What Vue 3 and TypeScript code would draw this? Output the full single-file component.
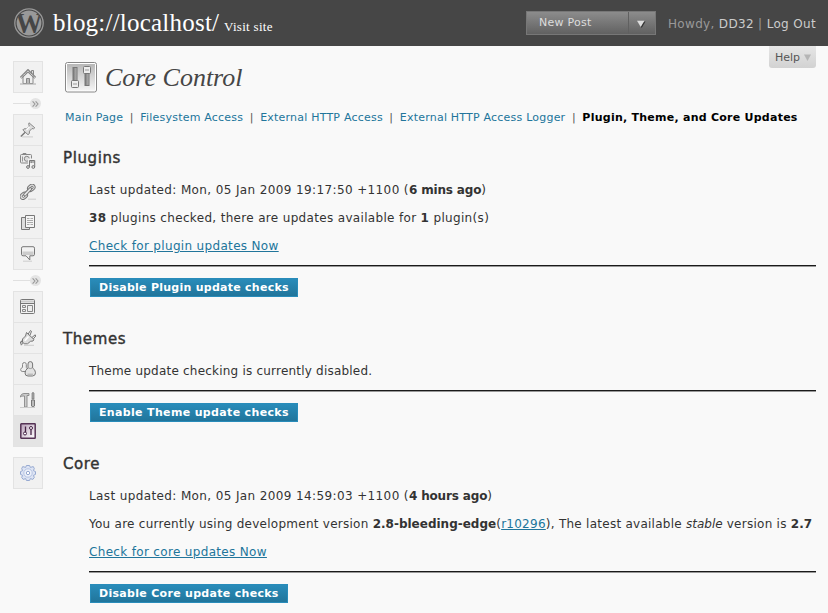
<script setup lang="ts">
interface Part { text: string; kind?: 'b' | 'a' | 'i' }
interface Line { cls: string; parts: Part[] }
interface Section { title: string; cls: string; lines: Line[]; button: string }

const tabs = [
  'Main Page',
  'Filesystem Access',
  'External HTTP Access',
  'External HTTP Access Logger',
]

const sections: Section[] = [
  {
    title: 'Plugins',
    cls: 'plugins',
    lines: [
      { cls: 'stamp', parts: [{ text: 'Last updated: Mon, 05 Jan 2009 19:17:50 +1100 (' }, { text: '6 mins ago', kind: 'b' }, { text: ')' }] },
      { cls: 'count', parts: [{ text: '38', kind: 'b' }, { text: ' plugins checked, there are updates available for ' }, { text: '1', kind: 'b' }, { text: ' plugin(s)' }] },
      { cls: 'check', parts: [{ text: 'Check for plugin updates Now', kind: 'a' }] },
    ],
    button: 'Disable Plugin update checks',
  },
  {
    title: 'Themes',
    cls: 'themes',
    lines: [{ cls: 'status', parts: [{ text: 'Theme update checking is currently disabled.' }] }],
    button: 'Enable Theme update checks',
  },
  {
    title: 'Core',
    cls: 'core',
    lines: [
      { cls: 'stamp', parts: [{ text: 'Last updated: Mon, 05 Jan 2009 14:59:03 +1100 (' }, { text: '4 hours ago', kind: 'b' }, { text: ')' }] },
      {
        cls: 'version',
        parts: [
          { text: 'You are currently using development version ' },
          { text: '2.8-bleeding-edge', kind: 'b' },
          { text: '(' },
          { text: 'r10296', kind: 'a' },
          { text: '), The latest available ' },
          { text: 'stable', kind: 'i' },
          { text: ' version is ' },
          { text: '2.7', kind: 'b' },
        ],
      },
      { cls: 'check', parts: [{ text: 'Check for core updates Now', kind: 'a' }] },
    ],
    button: 'Disable Core update checks',
  },
]
</script>

<template>
  <div class="page">
    <header class="head">
      <svg class="logo" viewBox="0 0 30 30">
        <defs><clipPath id="disc"><circle cx="15" cy="15" r="12.6" /></clipPath></defs>
        <circle cx="15" cy="15" r="14.2" fill="none" stroke="#999" stroke-width="1.3" />
        <circle cx="15" cy="15" r="12.4" fill="#999" />
        <g clip-path="url(#disc)"><text x="15" y="25" text-anchor="middle" textLength="27" lengthAdjust="spacingAndGlyphs" class="logo-w">W</text></g>
      </svg>
      <h1 class="site">blog://localhost/</h1>
      <a class="visit">Visit site</a>
      <div class="newpost">
        <span class="np-label">New Post</span>
        <span class="np-arrow">
          <svg width="10" height="8" viewBox="0 0 10 8"><path d="M2 1.5h7.5L5.7 8z" fill="#333" /><path d="M1 .8h7.5L4.7 7z" fill="#ddd" /></svg>
        </span>
      </div>
      <p class="user"><span class="dim">Howdy,</span> <a>DD32</a> <span class="dim">|</span> <a>Log Out</a></p>
    </header>

    <div class="body">
      <nav class="menu">
        <div class="group home">
          <div class="item">
            <svg class="ic" viewBox="0 0 16 16">
              <path d="M3 8v6.500h10V8L8 3.200z" fill="#eee" stroke="#888" />
              <path d="M11.500 4V1.500h2V6" fill="#ddd" stroke="#888" />
              <path d="M.7 8.800L8 1.500l7.300 7.300" fill="none" stroke="#888" stroke-width="2.600" />
              <path d="M1.200 8.600L8 1.900l6.800 6.700" fill="none" stroke="#eee" stroke-width="1" stroke-dasharray="1.200 .8" />
              <path d="M6.500 14.500v-5h3v5" fill="#bbb" stroke="#888" />
              <path d="M0 15h16" stroke="#aaa" />
            </svg>
          </div>
        </div>
        <div class="sep"><i class="rule" /><span class="dot"><svg width="7" height="6" viewBox="0 0 7 6"><path d="M.6.3L3 3 .6 5.7M3.6.3L6 3 3.6 5.7" fill="none" stroke="#999" stroke-width="1.1" /></svg></span></div>
        <div class="group">
          <div class="item">
            <svg class="ic" viewBox="0 0 16 16">
              <path d="M6 9.500L.8 14.400" stroke="#777" stroke-width="1.400" />
              <path d="M9 .8l5.800 5-1.300 1-1.500-.3-2.500 2.600-.2 2.500-1.300 1.100L2.800 8l1.100-1.100 2.800-.2 2.600-2.500-.6-2z" fill="#ddd" stroke="#888" />
              <path d="M9.400 4.700l-3 3.200" stroke="#fafafa" stroke-width="1.500" />
              <path d="M2 14.900h11" stroke="#ccc" />
            </svg>
          </div>
          <div class="item">
            <svg class="ic" viewBox="0 0 16 16">
              <rect x=".5" y="1.500" width="11" height="8.500" rx="1" fill="#ececec" stroke="#888" />
              <path d="M3 1.500V.5h3v1" fill="none" stroke="#888" />
              <circle cx="6.800" cy="5.800" r="2.500" fill="#ddd" stroke="#888" />
              <path d="M2.500 3.500v5" stroke="#999" />
              <path d="M9.500 14V7h5.500v7" fill="none" stroke="#f1f1f1" stroke-width="3" />
              <path d="M9.500 14V7.500h5.200V14M9.500 9h5.200" fill="none" stroke="#777" />
              <circle cx="8" cy="14" r="1.400" fill="#ddd" stroke="#777" /><circle cx="13.300" cy="14" r="1.400" fill="#ddd" stroke="#777" />
            </svg>
          </div>
          <div class="item">
            <svg class="ic" viewBox="0 0 16 16">
              <rect x="7.300" y=".8" width="8" height="6" rx="3" transform="rotate(-42 11.300 3.800)" fill="#e2e2e2" stroke="#777" />
              <rect x="-.2" y="8.800" width="8" height="6" rx="3" transform="rotate(-42 3.800 11.800)" fill="#e2e2e2" stroke="#777" />
              <circle cx="12" cy="3.400" r="1.200" fill="#f8f8f8" stroke="#777" /><circle cx="3.400" cy="12.200" r="1.200" fill="#f8f8f8" stroke="#777" />
              <path d="M5 10.600l5.300-5.600" stroke="#777" stroke-width="3.600" stroke-linecap="round" /><path d="M5 10.600l5.300-5.600" stroke="#e6e6e6" stroke-width="1.700" stroke-linecap="round" />
              <path d="M8 15.200h8" stroke="#ccc" />
            </svg>
          </div>
          <div class="item">
            <svg class="ic" viewBox="0 0 16 16">
              <path d="M1.500 2.500h8v12h-8z" fill="#ddd" stroke="#777" />
              <path d="M5.500.5h9v12h-9z" fill="#f5f5f5" stroke="#777" />
              <path d="M7 3.500h2.500M10.500 3.500H13M7 5.500h6M7 7.500h6M7 9.500h2.500M10.500 9.500H13" stroke="#aaa" />
            </svg>
          </div>
          <div class="item">
            <svg class="ic" viewBox="0 0 16 16">
              <path d="M3 .7h10q1.500 0 1.500 1.500v6q0 1.600-1.500 1.600h-3.200V14L6 9.800H3q-1.500 0-1.500-1.600v-6Q1.500.7 3 .7z" fill="#f2f2f2" stroke="#777" />
              <path d="M2.500 5.500h11v3.500h-11z" fill="#ccc" />
              <path d="M3 15.200h9" stroke="#ccc" />
            </svg>
          </div>
        </div>
        <div class="sep"><i class="rule" /><span class="dot"><svg width="7" height="6" viewBox="0 0 7 6"><path d="M.6.3L3 3 .6 5.7M3.6.3L6 3 3.6 5.7" fill="none" stroke="#999" stroke-width="1.1" /></svg></span></div>
        <div class="group">
          <div class="item">
            <svg class="ic" viewBox="0 0 16 16">
              <rect x=".5" y=".5" width="14" height="14" rx="1" fill="#f3f3f3" stroke="#777" />
              <path d="M1 2.500h13" stroke="#ccc" stroke-width="2" /><path d="M1 4.500h13" stroke="#777" />
              <path d="M2.500 6.500h3v2h-3zM2.500 10.500h3v2h-3zM7.500 6.500h5v6h-5z" fill="#eee" stroke="#888" />
            </svg>
          </div>
          <div class="item">
            <svg class="ic" viewBox="0 0 16 16">
              <path d="M4 11.500Q1 11.500.5 15" fill="none" stroke="#777" stroke-width="3" /><path d="M4 11.500Q1 11.500.5 15" fill="none" stroke="#ddd" />
              <path d="M7.800 4.500l2.700-4 1 .8-1.500 4M11.500 7.800l3.700-3 .6 1.200-3 3.500" fill="#eee" stroke="#777" />
              <path d="M6.500 2.500l7.500 7-1 1.500-2.500.3-3 2.500H4.200L2.500 12V9l3-3z" fill="#ddd" stroke="#777" />
              <path d="M4.800 10.800l3.700-4.300" stroke="#fff" stroke-width="1.700" /><path d="M4 15.300h10" stroke="#ccc" />
            </svg>
          </div>
          <div class="item">
            <svg class="ic" viewBox="0 0 16 16">
              <path d="M2.500 6.400V3.500Q2.500 1.500 4.400 1.500T6.300 3.500V6.400Q8 7.500 7.500 10.500H2.200Q.5 10 .6 8.600.8 7 2.500 6.400z" fill="#eee" stroke="#888" />
              <path d="M8 7V3Q8 .6 10.300.6T12.600 3v4Q15.500 8.800 15.500 11.800T12.500 15H8Q5 15 5 12t3-5z" fill="#e2e2e2" stroke="#777" />
              <path d="M8.200 6.900q2.100 1.400 4.200 0" fill="none" stroke="#999" /><path d="M7.500 13.300h5.500" stroke="#bbb" stroke-width="1.500" />
            </svg>
          </div>
          <div class="item">
            <svg class="ic" viewBox="0 0 16 16">
              <path d="M.5 4Q1.500 1.500 4 1.500h5v2H7V15H4.500V4H3Q1.500 4 .5 5z" fill="#ccc" stroke="#888" stroke-width=".9" />
              <path d="M12 1l1-.6 1 .6v6h-2z" fill="#aaa" stroke="#777" stroke-width=".7" /><path d="M11.500 8h3v6q-1.500 2-3 0z" fill="#bbb" stroke="#777" />
              <path d="M0 15.500h15" stroke="#ccc" />
            </svg>
          </div>
          <div class="item current">
            <svg class="ic" viewBox="0 0 16 16">
              <defs><linearGradient id="plum" x1="0" y1="0" x2="1" y2="1"><stop offset="0" stop-color="#b79fb8" /><stop offset="1" stop-color="#fff" /></linearGradient></defs>
              <rect x=".8" y=".8" width="14.400" height="14.400" rx=".5" fill="url(#plum)" stroke="#553355" stroke-width="1.500" />
              <path d="M5.500 3.500v6M11 6.500V12" stroke="#442244" stroke-width="1.300" />
              <circle cx="5" cy="10.500" r="1.500" fill="#fff" stroke="#442244" /><circle cx="11" cy="5" r="1.500" fill="#fff" stroke="#442244" />
            </svg>
          </div>
        </div>
        <div class="group last">
          <div class="item">
            <svg class="ic" viewBox="0 0 16 16">
              <path d="M6.400.5h3.200l.7 1.900 3-.8 1 2-.9 2 2.100 1v2.800l-2.100 1 .9 2-1.500 2-2.500-.8-.7 1.900H6.400l-.7-1.900-2.500.8-1.500-2 .9-2L.5 9.400V6.600l2.100-1-.9-2 1-2 3 .8z" fill="#dde4f4" stroke="#96a9d1" />
              <circle cx="8" cy="8" r="4.200" fill="#edf1fa" stroke="#b5c3e2" /><circle cx="8" cy="8" r="1.700" fill="#fff" stroke="#96a9d1" />
            </svg>
          </div>
        </div>
      </nav>

      <main class="main">
        <div class="titlebar">
          <svg class="big" viewBox="0 0 32 31">
            <defs>
              <linearGradient id="panel" x1="0" y1="0" x2="0" y2="1"><stop offset="0" stop-color="#b8b8b8" /><stop offset="1" stop-color="#f4f4f4" /></linearGradient>
              <linearGradient id="slot" x1="0" y1="0" x2="1" y2="0"><stop offset="0" stop-color="#777" /><stop offset="1" stop-color="#bbb" /></linearGradient>
            </defs>
            <rect x=".5" y=".5" width="31" height="29.500" rx="2" fill="#fff" stroke="#888" />
            <rect x="2" y="2" width="28" height="26.500" fill="url(#panel)" />
            <rect x="8" y="5.500" width="4" height="16" fill="url(#slot)" stroke="#777" />
            <rect x="20" y="8" width="4" height="15.500" fill="url(#slot)" stroke="#777" />
            <rect x="6.500" y="18.500" width="7" height="7" rx="1" fill="#eee" stroke="#777" /><path d="M8 22h4" stroke="#999" />
            <rect x="18.500" y="4.500" width="7" height="7" rx="1" fill="#eee" stroke="#777" /><path d="M20 8h4" stroke="#999" />
          </svg>
          <h2 class="title">Core Control</h2>
          <div class="help">Help<svg width="7" height="7" viewBox="0 0 7 7"><path d="M0 .5h7L3.500 7z" fill="#b5b5b5" /></svg></div>
        </div>

        <div class="tabs">
          <template v-for="t in tabs" :key="t"><a>{{ t }}</a><span class="bar">|</span></template>
          <strong>Plugin, Theme, and Core Updates</strong>
        </div>

        <section v-for="s in sections" :key="s.title" :class="['section', s.cls]">
          <h3>{{ s.title }}</h3>
          <div class="inner">
            <p v-for="(l, i) in s.lines" :key="i" :class="l.cls"><span v-for="(p, j) in l.parts" :key="j" :class="p.kind">{{ p.text }}</span></p>
            <div class="hr" />
            <button class="btn">{{ s.button }}</button>
          </div>
        </section>
      </main>
    </div>
  </div>
</template>

<style>
body { margin: 0; background: #f9f9f9; overflow: hidden; }
</style>

<style scoped>
.page { width: 828px; height: 613px; overflow: hidden; background: #f9f9f9; color: #333; font: 13px/18px "DejaVu Sans", sans-serif; white-space: nowrap; }
h1, h2, h3, p { margin: 0; font-weight: normal; }
.head { height: 46px; background: #464646; display: flex; align-items: center; box-sizing: border-box; padding: 0 12px 0 14px; }
.logo { width: 30px; height: 30px; flex: none; }
.logo-w { font: bold 29px "Liberation Serif", serif; fill: #464646; }
.site { margin-left: 9px; font: 25px/32px "Liberation Serif", serif; color: #fff; width: 171px; letter-spacing: .22px; }
.visit { font: 13px/18px "Liberation Serif", serif; color: #fff; margin-top: 7px; letter-spacing: .3px; }
.newpost { margin-left: auto; width: 130px; height: 24px; box-sizing: border-box; display: flex; border: 1px solid #777; background: linear-gradient(#8c8c8c, #616161); color: #ddd; font-size: 11px; line-height: 22px; }
.np-label { width: 102px; box-sizing: border-box; padding-left: 12px; letter-spacing: .25px; border-right: 1px solid #606060; }
.np-arrow { flex: 1; display: flex; align-items: center; justify-content: center; padding-right: 2px; padding-top: 2px; }
.user { width: 148px; margin-left: 12px; font-size: 12px; color: #ccc; letter-spacing: .33px; padding-top: 1px; }
.dim { color: #999; }
.body { display: flex; }
.menu { width: 30px; margin: 15px 0 0 13px; flex: none; }
.group { border: 1px solid #e3e3e3; background: #f1f1f1; }
.item { height: 30px; display: flex; align-items: center; justify-content: center; border-bottom: 1px solid #e3e3e3; }
.item:last-child { border-bottom: 0; }
.current { background: #e4e4e4; }
.ic { width: 16px; height: 16px; display: block; }
.sep { height: 21px; display: flex; align-items: center; }
.rule { width: 17px; height: 1px; background: #e0e0e0; }
.dot { width: 11px; height: 11px; border-radius: 50%; background: #e4e4e4; display: flex; align-items: center; justify-content: center; }
.last { margin-top: 10px; }
.main { flex: 1; margin-left: 20px; padding-right: 12px; min-width: 0; }
.titlebar { display: flex; height: 62px; }
.big { width: 32px; height: 31px; margin: 16px 0 0 2px; flex: none; }
.title { font: italic 26px/34px "Liberation Serif", serif; margin: 15px 0 0 8px; color: #464646; }
.help { margin-left: auto; width: 47px; height: 22px; box-sizing: border-box; padding: 1px 0 0 6px; display: flex; align-items: center; gap: 4px; font-size: 11px; color: #555; background: linear-gradient(#e6e6e6, #d2d2d2); border-radius: 0 0 3px 3px; }
.tabs { display: flex; height: 18px; box-sizing: border-box; padding: 1px 0 0 2px; font-size: 11px; letter-spacing: .21px; }
.tabs a, .a { color: #21759b; }
.bar { width: 17px; text-align: center; color: #555; }
.tabs strong { color: #000; letter-spacing: .25px; }
.section { padding-top: 23px; box-sizing: border-box; }
h3 { font-size: 15px; line-height: 18px; margin-bottom: 13px; letter-spacing: .6px; -webkit-text-stroke: .4px #333; }
.section.plugins { height: 181px; }
.section.themes { height: 125px; }
.section.core { height: 181px; }
.inner { padding-left: 26px; }
.inner p { height: 18px; line-height: 20px; margin-bottom: 10px; font-size: 12px; white-space: pre; }
.stamp { letter-spacing: .38px; }
.stamp .b { letter-spacing: -.15px; }
.count { letter-spacing: .33px; }
.check { letter-spacing: .33px; }
.status { letter-spacing: .21px; }
.version { letter-spacing: .26px; }
.version .b, .version .i { letter-spacing: 0; }
.b { font-weight: bold; }
.a { text-decoration: underline; }
.i { font-style: italic; }
.hr { height: 1px; background: #1a1a1a; border-bottom: 1px solid #999; margin: 11px 0; }
.btn { display: block; margin-left: 1px; height: 19px; padding: 1px 8px 0; border: 1px solid #298cba; background: linear-gradient(#298cba, #21759b); color: #fff; font: bold 11px/16px "DejaVu Sans", sans-serif; letter-spacing: .26px; }
.themes .btn { letter-spacing: .34px; }
.core .btn { letter-spacing: .3px; }
</style>
